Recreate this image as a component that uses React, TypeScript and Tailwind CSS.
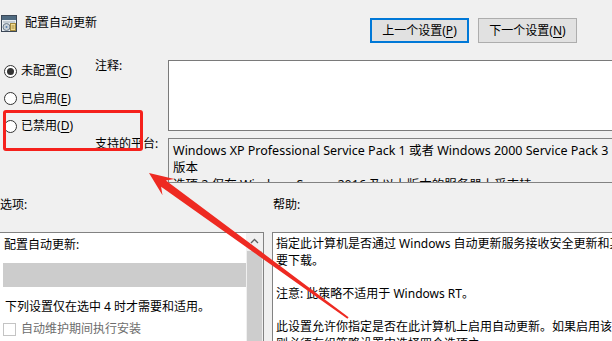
import React from 'react';

const font = "font-['Noto_Sans','Noto_Sans_CJK_SC',sans-serif]";

function PolicyIcon() {
  return (
    <svg width="16" height="17" viewBox="0 0 16 17" className="shrink-0">
      <rect x="0.5" y="0.5" width="15" height="16" fill="#e9eef2" stroke="#3b4756" />
      <rect x="1" y="1" width="14" height="4" fill="#4f6a80" />
      <line x1="2" y1="7" x2="14" y2="7" stroke="#9aa8b4" />
      <circle cx="5.5" cy="12" r="3.5" fill="#c9d2d9" stroke="#6b7a88" />
      <circle cx="5.5" cy="12" r="1" fill="#5b82b0" />
      <rect x="9.5" y="8.5" width="5" height="7" fill="#f2dc92" stroke="#a48a3c" />
      <line x1="10.5" y1="11" x2="13.5" y2="11" stroke="#a48a3c" />
      <line x1="10.5" y1="13" x2="13.5" y2="13" stroke="#a48a3c" />
    </svg>
  );
}

function Radio({ checked, label, k }: { checked?: boolean; label: string; k: string }) {
  return (
    <div className="flex items-center h-[20px]">
      <span className="shrink-0 w-[13px] h-[13px] rounded-full border border-[#333333] bg-white flex items-center justify-center">
        {checked && <span className="w-[7px] h-[7px] rounded-full bg-[#333333]" />}
      </span>
      <span className="ml-[4px] leading-[16px] whitespace-nowrap">
        {label}(<span className="underline underline-offset-2">{k}</span>)
      </span>
    </div>
  );
}

export default function App() {
  return (
    <div className={`relative w-[612px] h-[341px] overflow-hidden bg-[#f0f0f0] text-[12px] text-black ${font}`}>
      {/* header */}
      <div className="flex h-[60px]">
        <div className="flex items-start pt-[15px] pl-[1px]">
          <PolicyIcon />
          <span className="ml-[8px] leading-[16px]">配置自动更新</span>
        </div>
        <div className="ml-auto flex gap-[9px] pt-[18px] pr-[35px]">
          <button className="h-[25px] w-[99px] border-2 border-[#0078d7] bg-[#e1e1e1] leading-[16px]">
            上一个设置(<span className="underline underline-offset-2">P</span>)
          </button>
          <button className="h-[25px] w-[99px] border border-[#adadad] bg-[#e1e1e1] leading-[16px]">
            下一个设置(<span className="underline underline-offset-2">N</span>)
          </button>
        </div>
      </div>

      {/* state + comment + platform */}
      <div className="flex h-[123px]">
        <div className="shrink-0 w-[95px] flex flex-col gap-[7.5px] pt-[1px] pl-[4px]">
          <Radio checked label="未配置" k="C" />
          <Radio label="已启用" k="E" />
          <Radio label="已禁用" k="D" />
        </div>
        <div className="flex-1 min-w-0 flex flex-col gap-[7px]">
          <div className="flex">
            <div className="shrink-0 w-[73px] -mt-[2.5px] leading-[16px]">注释:</div>
            <div className="shrink-0 h-[71px] w-[460px] border border-[#7a7a7a] bg-white" />
          </div>
          <div className="flex">
            <div className="shrink-0 w-[73px] -mt-[2px] leading-[16px] whitespace-nowrap">支持的平台:</div>
            <div className="shrink-0 h-[45px] w-[460px] border border-[#828282] overflow-hidden pl-[4px] pt-[3px] text-[12.5px] leading-[17px] whitespace-nowrap">
              <div>Windows XP Professional Service Pack 1 或者 Windows 2000 Service Pack 3</div>
              <div>版本</div>
              <div>选项 2 仅在 Windows Server 2016 及以上版本的服务器上受支持</div>
            </div>
          </div>
        </div>
      </div>

      {/* section labels */}
      <div className="flex h-[49px] pt-[14px] leading-[16px]">
        <div className="shrink-0 w-[273px]">选项:</div>
        <div>帮助:</div>
      </div>

      {/* options + help */}
      <div className="flex gap-[8px] h-[109px]">
        <div className="shrink-0 w-[264px] border-t border-r border-[#828282] bg-white flex">
          <div className="flex-1 flex flex-col pt-[4px]">
            <div className="pl-[4px] leading-[16px]">配置自动更新:</div>
            <div className="ml-[3px] mt-[10px] h-[24px] bg-[#cccccc]" />
            <div className="pl-[5px] mt-[12px] leading-[16px] whitespace-nowrap">下列设置仅在选中 4 时才需要和适用。</div>
            <div className="flex items-center pl-[3px] mt-[6px] h-[16px]">
              <span className="shrink-0 w-[13px] h-[13px] border border-[#c4c4c4] bg-white" />
              <span className="ml-[5px] text-[#6d6d6d] leading-[16px] whitespace-nowrap">自动维护期间执行安装</span>
            </div>
          </div>
          <div className="shrink-0 w-[17px] bg-[#f0f0f0] flex flex-col items-center">
            <svg width="9" height="6" viewBox="0 0 9 6" className="mt-[5px]">
              <path d="M1 5 L4.5 1.5 L8 5" fill="none" stroke="#606060" strokeWidth="1.3" />
            </svg>
            <div className="mt-[7px] w-[15px] flex-1 bg-[#cdcdcd]" />
          </div>
        </div>
        <div className="flex-1 min-w-0 border-t border-l border-[#828282] bg-white pl-[3px] pt-[3px] leading-[16.6px] whitespace-nowrap overflow-hidden">
          <div>指定此计算机是否通过 Windows 自动更新服务接收安全更新和其他重</div>
          <div>要下载。</div>
          <div className="h-[16.6px]" />
          <div>注意: 此策略不适用于 Windows RT。</div>
          <div className="h-[16.6px]" />
          <div>此设置允许你指定是否在此计算机上启用自动更新。如果启用该服务</div>
          <div>则必须在组策略设置中选择四个选项之一:</div>
        </div>
      </div>

      {/* red annotations */}
      <div className="absolute left-[3px] top-[110px] w-[140px] h-[41px] border-[3px] border-[#f5211c] rounded-[3px]" />
      <svg className="absolute left-0 top-0 pointer-events-none" width="612" height="341" viewBox="0 0 612 341">
        <polygon
          points="149,173 174.3,179 165.9,180.4 348.6,317.2 347.4,318.8 161.1,186.8 162.5,195.2"
          fill="#ee2a22"
        />
      </svg>
    </div>
  );
}
